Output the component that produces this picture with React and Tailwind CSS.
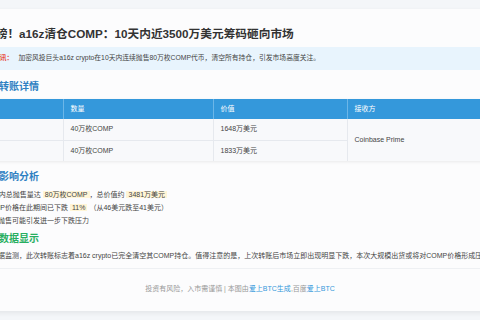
export default function App() {
  const font = { fontFamily: '"Liberation Sans", "Noto Sans CJK SC", sans-serif' };
  return (
    <div className="w-[480px] h-[320px] overflow-hidden bg-[#f4f6f9] flex justify-center pt-[9px]" style={font}>
      <div className="w-[544px] shrink-0 h-[302px] bg-[#fcfcfd] shadow-[0_2px_5px_rgba(0,0,0,0.07)] px-[16px] pt-[17px] flex flex-col">
        <h1 className="text-[11.7px] leading-[16px] font-bold text-[#333]">
          重磅！a16z清仓COMP：10天内近3500万美元筹码砸向市场
        </h1>
        <div className="mt-[5px] h-[23px] bg-[#e8f4fd] pl-[9px] flex items-center text-[6.8px] text-[#444]">
          <span className="text-[#e74c3c] font-bold mr-[5px]">快讯：</span>
          <span>加密风投巨头a16z crypto在10天内连续抛售80万枚COMP代币，清空所有持仓，引发市场高度关注。</span>
        </div>
        <h2 className="mt-[10px] pl-[15px] text-[10px] leading-[14px] font-bold text-[#2e80c2]">转账详情</h2>
        <div className="mt-[5px] flex justify-center">
          <table className="w-[700px] shrink-0 table-fixed border-collapse text-[7px] text-[#444] shadow-[0_1px_3px_rgba(0,0,0,0.08)]">
            <colgroup>
              <col className="w-[173px]" />
              <col className="w-[150px]" />
              <col className="w-[134px]" />
              <col className="w-[243px]" />
            </colgroup>
            <thead>
              <tr className="bg-[#3498db] text-white h-[20px]">
                <th className="text-left font-normal px-[7px] border-r border-[#6cb6e8]">转账时间</th>
                <th className="text-left font-normal px-[7px] border-r border-[#6cb6e8]">数量</th>
                <th className="text-left font-normal px-[7px] border-r border-[#6cb6e8]">价值</th>
                <th className="text-left font-normal px-[7px]">接收方</th>
              </tr>
            </thead>
            <tbody className="bg-[#f8f9fb]">
              <tr className="h-[21px] border-b border-[#e6e9ee]">
                <td className="px-[7px] border-r border-[#e6e9ee]">第一笔</td>
                <td className="px-[7px] border-r border-[#e6e9ee]">40万枚COMP</td>
                <td className="px-[7px] border-r border-[#e6e9ee]">1648万美元</td>
                <td rowSpan={2} className="px-[7px] align-middle">Coinbase Prime</td>
              </tr>
              <tr className="h-[21px]">
                <td className="px-[7px] border-r border-[#e6e9ee]">第二笔</td>
                <td className="px-[7px] border-r border-[#e6e9ee]">40万枚COMP</td>
                <td className="px-[7px] border-r border-[#e6e9ee]">1833万美元</td>
              </tr>
            </tbody>
          </table>
        </div>
        <h2 className="mt-[9px] pl-[15px] text-[10px] leading-[14px] font-bold text-[#2e80c2]">影响分析</h2>
        <ul className="mt-[4px] text-[7px] leading-[13px] text-[#444]">
          <li>
            10天内总抛售量达 <span className="bg-[#fff5d6] px-[2px]">80万枚COMP</span>，总价值约 <span className="bg-[#fff5d6] px-[2px]">3481万美元</span>
          </li>
          <li>
            COMP价格在此期间已下跌 <span className="bg-[#fff5d6] px-[2px]">11%</span> （从46美元跌至41美元）
          </li>
          <li>大额抛售可能引发进一步下跌压力</li>
        </ul>
        <h2 className="mt-[5px] pl-[15px] text-[10px] leading-[14px] font-bold text-[#27ae60]">数据显示</h2>
        <p className="mt-[3px] text-[7px] leading-[13px] text-[#444] whitespace-nowrap">
          另外据监测，此次转账标志着a16z crypto已完全清空其COMP持仓。值得注意的是，上次转账后市场立即出现明显下跌，本次大规模出货或将对COMP价格形成压力。
        </p>
        <div className="mt-[6px] border-t border-[#eef0f3] pt-[13px] text-center text-[7px] leading-[13px] text-[#999]">
          投资有风险，入市需谨慎 | 本图由<span className="text-[#3498db]">爱上BTC生成</span>,百度<span className="text-[#3498db]">爱上BTC</span>
        </div>
      </div>
    </div>
  );
}
